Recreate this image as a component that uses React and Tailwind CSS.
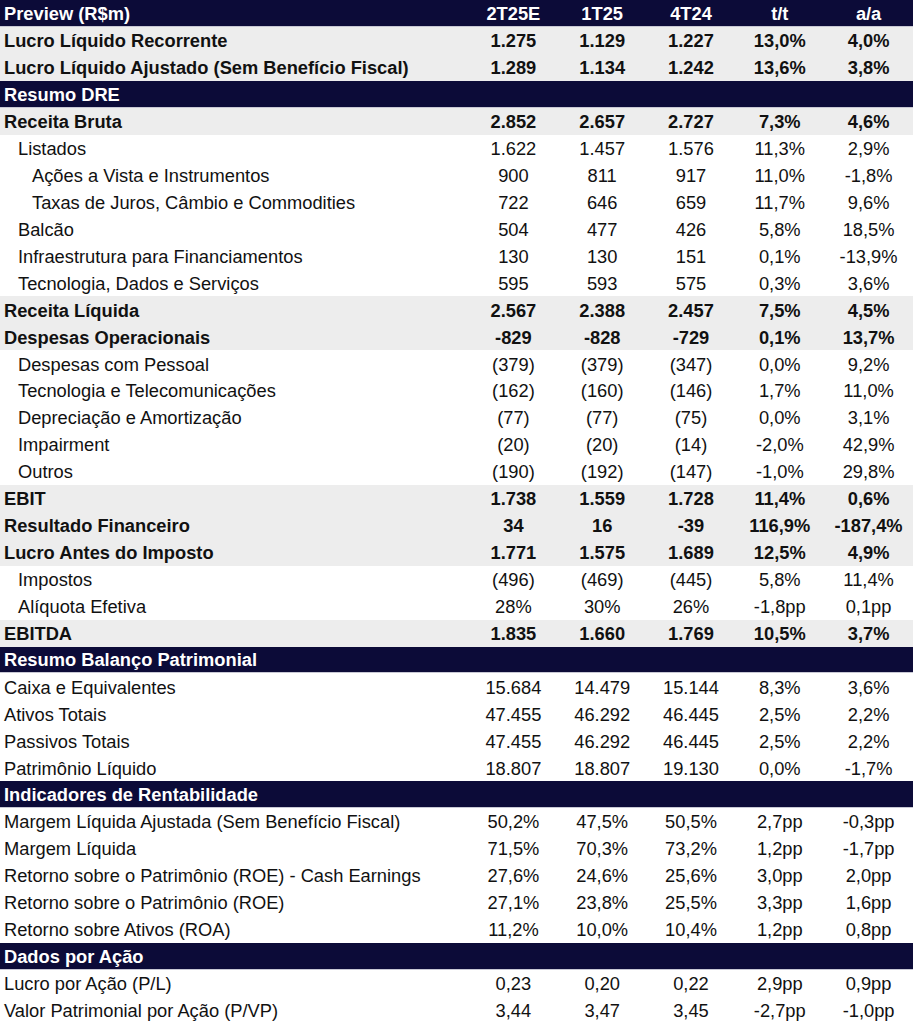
import React from 'react'

const rows = [
  { t: 'head', label: 'Preview (R$m)', v: ['2T25E', '1T25', '4T24', 't/t', 'a/a'] },
  { t: 'bold', label: 'Lucro Líquido Recorrente', v: ['1.275', '1.129', '1.227', '13,0%', '4,0%'] },
  { t: 'bold', label: 'Lucro Líquido Ajustado (Sem Benefício Fiscal)', v: ['1.289', '1.134', '1.242', '13,6%', '3,8%'] },
  { t: 'head', label: 'Resumo DRE' },
  { t: 'bold', label: 'Receita Bruta', v: ['2.852', '2.657', '2.727', '7,3%', '4,6%'] },
  { t: 'plain', i: 1, label: 'Listados', v: ['1.622', '1.457', '1.576', '11,3%', '2,9%'] },
  { t: 'plain', i: 2, label: 'Ações a Vista e Instrumentos', v: ['900', '811', '917', '11,0%', '-1,8%'] },
  { t: 'plain', i: 2, label: 'Taxas de Juros, Câmbio e Commodities', v: ['722', '646', '659', '11,7%', '9,6%'] },
  { t: 'plain', i: 1, label: 'Balcão', v: ['504', '477', '426', '5,8%', '18,5%'] },
  { t: 'plain', i: 1, label: 'Infraestrutura para Financiamentos', v: ['130', '130', '151', '0,1%', '-13,9%'] },
  { t: 'plain', i: 1, label: 'Tecnologia, Dados e Serviços', v: ['595', '593', '575', '0,3%', '3,6%'] },
  { t: 'bold', label: 'Receita Líquida', v: ['2.567', '2.388', '2.457', '7,5%', '4,5%'] },
  { t: 'bold', label: 'Despesas Operacionais', v: ['-829', '-828', '-729', '0,1%', '13,7%'] },
  { t: 'plain', i: 1, label: 'Despesas com Pessoal', v: ['(379)', '(379)', '(347)', '0,0%', '9,2%'] },
  { t: 'plain', i: 1, label: 'Tecnologia e Telecomunicações', v: ['(162)', '(160)', '(146)', '1,7%', '11,0%'] },
  { t: 'plain', i: 1, label: 'Depreciação e Amortização', v: ['(77)', '(77)', '(75)', '0,0%', '3,1%'] },
  { t: 'plain', i: 1, label: 'Impairment', v: ['(20)', '(20)', '(14)', '-2,0%', '42,9%'] },
  { t: 'plain', i: 1, label: 'Outros', v: ['(190)', '(192)', '(147)', '-1,0%', '29,8%'] },
  { t: 'bold', label: 'EBIT', v: ['1.738', '1.559', '1.728', '11,4%', '0,6%'] },
  { t: 'bold', label: 'Resultado Financeiro', v: ['34', '16', '-39', '116,9%', '-187,4%'] },
  { t: 'bold', label: 'Lucro Antes do Imposto', v: ['1.771', '1.575', '1.689', '12,5%', '4,9%'] },
  { t: 'plain', i: 1, label: 'Impostos', v: ['(496)', '(469)', '(445)', '5,8%', '11,4%'] },
  { t: 'plain', i: 1, label: 'Alíquota Efetiva', v: ['28%', '30%', '26%', '-1,8pp', '0,1pp'] },
  { t: 'bold', label: 'EBITDA', v: ['1.835', '1.660', '1.769', '10,5%', '3,7%'] },
  { t: 'head', label: 'Resumo Balanço Patrimonial' },
  { t: 'plain', label: 'Caixa e Equivalentes', v: ['15.684', '14.479', '15.144', '8,3%', '3,6%'] },
  { t: 'plain', label: 'Ativos Totais', v: ['47.455', '46.292', '46.445', '2,5%', '2,2%'] },
  { t: 'plain', label: 'Passivos Totais', v: ['47.455', '46.292', '46.445', '2,5%', '2,2%'] },
  { t: 'plain', label: 'Patrimônio Líquido', v: ['18.807', '18.807', '19.130', '0,0%', '-1,7%'] },
  { t: 'head', label: 'Indicadores de Rentabilidade' },
  { t: 'plain', label: 'Margem Líquida Ajustada (Sem Benefício Fiscal)', v: ['50,2%', '47,5%', '50,5%', '2,7pp', '-0,3pp'] },
  { t: 'plain', label: 'Margem Líquida', v: ['71,5%', '70,3%', '73,2%', '1,2pp', '-1,7pp'] },
  { t: 'plain', label: 'Retorno sobre o Patrimônio (ROE) - Cash Earnings', v: ['27,6%', '24,6%', '25,6%', '3,0pp', '2,0pp'] },
  { t: 'plain', label: 'Retorno sobre o Patrimônio (ROE)', v: ['27,1%', '23,8%', '25,5%', '3,3pp', '1,6pp'] },
  { t: 'plain', label: 'Retorno sobre Ativos (ROA)', v: ['11,2%', '10,0%', '10,4%', '1,2pp', '0,8pp'] },
  { t: 'head', label: 'Dados por Ação' },
  { t: 'plain', label: 'Lucro por Ação (P/L)', v: ['0,23', '0,20', '0,22', '2,9pp', '0,9pp'] },
  { t: 'plain', label: 'Valor Patrimonial por Ação (P/VP)', v: ['3,44', '3,47', '3,45', '-2,7pp', '-1,0pp'] }
]

const rowStyle = {
  head: 'bg-[#0c0b38] text-white font-bold border-b border-[#c8c8d4]',
  bold: 'bg-[#ededed] text-[#111] font-bold',
  plain: 'bg-white text-[#111]'
}

const indent = ['pl-[4px]', 'pl-[18px]', 'pl-[32px]']

const Row = ({ r }) => (
  <div className={`flex items-center pt-[2px] h-[26.95px] ${rowStyle[r.t]}`}>
    <div className={`w-[469px] shrink-0 whitespace-nowrap ${indent[r.i || 0]}`}>
      {r.label}
    </div>
    {(r.v || ['', '', '', '', '']).map((x, k) => (
      <div key={k} className="w-[88.8px] shrink-0 text-center whitespace-nowrap">
        {x}
      </div>
    ))}
  </div>
)

export default function App() {
  return (
    <div className="w-[913px] h-[1024px] overflow-hidden bg-white font-['Liberation_Sans',Arial,sans-serif] text-[18.3px] leading-none">
      {rows.map((r, k) => (
        <Row key={k} r={r} />
      ))}
    </div>
  )
}
